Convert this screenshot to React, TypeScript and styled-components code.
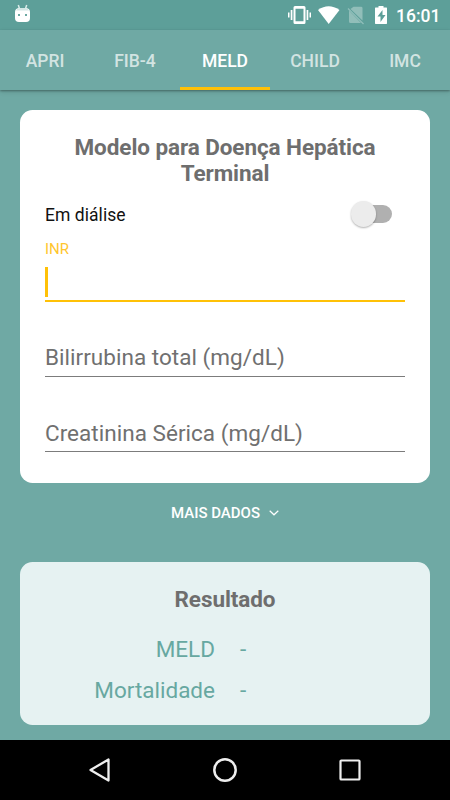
import React from "react";
import styled, { createGlobalStyle } from "styled-components";

const GlobalStyle = createGlobalStyle`
  * { box-sizing: border-box; }
  body { margin: 0; font-family: Roboto, "Liberation Sans", sans-serif; }
`;

const Screen = styled.div`
  width: 450px;
  height: 800px;
  display: flex;
  flex-direction: column;
  overflow: hidden;
  background: #6fa9a4;
`;

const StatusBar = styled.header`
  height: 30px;
  flex: none;
  display: flex;
  justify-content: space-between;
  background: #5d9f99;
`;

const StatusGroup = styled.div`
  display: flex;
  height: 30px;
`;

const Clock = styled.time`
  width: 54px;
  padding-right: 11px;
  margin-left: -1px;
  color: #fff;
  font-size: 17.5px;
  font-weight: 500;
  line-height: 32px;
  white-space: nowrap;
`;

const Tabs = styled.nav`
  height: 60px;
  flex: none;
  display: grid;
  grid-template-columns: repeat(5, 1fr);
  background: #6fa9a4;
  box-shadow: 0 1px 2px rgba(0, 0, 0, 0.32), 0 2px 5px rgba(0, 0, 0, 0.12);
  z-index: 1;
`;

const Tab = styled.button<{ $active?: boolean }>`
  padding: 5px 0 0;
  border: 0;
  border-bottom: 3px solid ${(p) => (p.$active ? "#ffc107" : "transparent")};
  background: none;
  color: ${(p) => (p.$active ? "#fff" : "rgba(255, 255, 255, 0.7)")};
  font: 500 17.5px Roboto, sans-serif;
`;

const Content = styled.main`
  flex: 1;
  padding: 20px 20px 0;
`;

const FormCard = styled.section`
  height: 372.5px;
  padding: 24px 25px 0;
  border-radius: 12.5px;
  background: #fff;
`;

const Title = styled.h1`
  margin: 0;
  color: #6e6e6e;
  font-size: 22.5px;
  font-weight: 700;
  letter-spacing: -0.08px;
  line-height: 26px;
  text-align: center;
`;

const SwitchRow = styled.div`
  height: 56px;
  display: flex;
  align-items: center;
  justify-content: space-between;
  padding-right: 13.5px;
  color: #111;
  font-size: 17.5px;
`;

const SwitchLabel = styled.span`
  padding-top: 1px;
  letter-spacing: 0.05px;
`;

const SwitchTrack = styled.span`
  width: 41px;
  height: 17.5px;
  display: flex;
  align-items: center;
  border-radius: 9px;
  background: linear-gradient(90deg, transparent 8px, #b0b0b0 8px);
`;

const SwitchThumb = styled.span`
  width: 25.5px;
  height: 25.5px;
  border-radius: 50%;
  background: #ececec;
  box-shadow: 0 1px 2px rgba(0, 0, 0, 0.3);
`;

const FocusedField = styled.label`
  height: 61px;
  margin-top: -1px;
  display: flex;
  flex-direction: column;
  border-bottom: 2px solid #ffc107;
`;

const FloatingLabel = styled.span`
  margin-top: -1px;
  color: #ffc62e;
  font-size: 15px;
  line-height: 18px;
`;

const Caret = styled.span`
  width: 2.5px;
  height: 30px;
  margin-top: auto;
  margin-bottom: 3px;
  background: #ffc107;
`;

const Field = styled.div<{ $gap: number }>`
  height: 75px;
  display: flex;
  align-items: flex-end;
  padding-bottom: ${(p) => p.$gap}px;
  border-bottom: 1px solid #7c7c7c;
  color: #707070;
  font-size: 22.5px;
  letter-spacing: 0.03px;
  line-height: 26px;
`;

const MoreButton = styled.button`
  width: 100%;
  height: 79.5px;
  padding: 0 0 18.5px;
  display: flex;
  align-items: center;
  justify-content: center;
  gap: 9px;
  border: 0;
  background: none;
  color: #fff;
  font: 500 15px Roboto, sans-serif;
`;

const ResultCard = styled.section`
  height: 162.5px;
  padding-top: 24px;
  border-radius: 12.5px;
  background: #e6f2f2;
`;

const Results = styled.dl`
  margin: 17px 0 0;
  display: grid;
  grid-template-columns: 195px 1fr;
  grid-auto-rows: 41px;
  column-gap: 25px;
  color: #67a8a1;
  font-size: 22.5px;
  line-height: 41px;
`;

const ResultName = styled.dt`
  text-align: right;
`;

const ResultValue = styled.dd`
  margin: 0;
`;

const NavigationBar = styled.footer`
  height: 60px;
  flex: none;
  display: grid;
  grid-template-columns: repeat(3, 125px);
  justify-content: center;
  justify-items: center;
  align-items: center;
  background: #000;
`;

const tabs = ["APRI", "FIB-4", "MELD", "CHILD", "IMC"];

const results = [
  { name: "MELD", value: "-" },
  { name: "Mortalidade", value: "-" },
];

const RobotIcon = () => (
  <svg width="45" height="30">
    <path d="M18.300 5l1.300 4M26.700 5l-1.300 4" stroke="#d9ebe9" strokeWidth="1.500" />
    <path d="M15 12q0-4 5-4h5q5 0 5 4v6q0 4-4 4h-7q-4 0-4-4z" fill="#fff" />
    <path d="M16 10.500q1-2.500 4-2.500h5q3 0 4 2.500z" fill="#d3e7e5" />
    <path d="M18 14h2v2h-2zM25 14h2v2h-2z" fill="#6ba8a2" />
  </svg>
);

const SystemIcons = () => (
  <svg width="127" height="30" viewBox="-7 0 127 30" fill="#fff">
    <path d="M18 6h9q1.500 0 1.500 1.500v15q0 1.500-1.500 1.500h-9q-1.500 0-1.500-1.500v-15q0-1.500 1.500-1.500zM18.500 8.700v12.600h8V8.700z" fillRule="evenodd" />
    <path d="M13.700 10h1.700v10h-1.700zM11 12.500h1.500v5H11zM29.600 10h1.700v10h-1.700zM32.500 12.500H34v5h-1.500z" />
    <path d="M41 10Q51.500 2.500 62.500 10L51.700 24z" />
    <path d="M73.500 9l3-2.300H84q1.500 0 1.500 1.300v12.500zM72 10.500v11q0 1.500 1.500 1.500H84z" opacity=".32" />
    <path d="M71 8.500l15.500 15.500" stroke="#8fbfba" strokeWidth="1.300" />
    <path d="M98.500 7.500h3V6h5v1.500h3q.5 0 .5 1V23q0 1-.5 1h-11q-.5 0-.5-1V8.500q0-1 .5-1zM105.500 10l-5 6.500h3V22l5-7h-3z" fillRule="evenodd" />
  </svg>
);

const ChevronIcon = () => (
  <svg width="10" height="8" fill="none" stroke="#fff" strokeWidth="1.200">
    <path d="M.7 1.700L5 5.800l4.300-4.100" />
  </svg>
);

export default function App() {
  return (
    <>
      <GlobalStyle />
      <Screen>
        <StatusBar>
          <StatusGroup>
            <RobotIcon />
          </StatusGroup>
          <StatusGroup>
            <SystemIcons />
            <Clock>16:01</Clock>
          </StatusGroup>
        </StatusBar>
        <Tabs>
          {tabs.map((tab) => (
            <Tab key={tab} $active={tab === "MELD"}>
              {tab}
            </Tab>
          ))}
        </Tabs>
        <Content>
          <FormCard>
            <Title>Modelo para Doença Hepática Terminal</Title>
            <SwitchRow>
              <SwitchLabel>Em diálise</SwitchLabel>
              <SwitchTrack>
                <SwitchThumb />
              </SwitchTrack>
            </SwitchRow>
            <FocusedField>
              <FloatingLabel>INR</FloatingLabel>
              <Caret />
            </FocusedField>
            <Field $gap={6}>Bilirrubina total (mg/dL)</Field>
            <Field $gap={5}>Creatinina Sérica (mg/dL)</Field>
          </FormCard>
          <MoreButton>
            MAIS DADOS
            <ChevronIcon />
          </MoreButton>
          <ResultCard>
            <Title as="h2">Resultado</Title>
            <Results>
              {results.map(({ name, value }) => (
                <React.Fragment key={name}>
                  <ResultName>{name}</ResultName>
                  <ResultValue>{value}</ResultValue>
                </React.Fragment>
              ))}
            </Results>
          </ResultCard>
        </Content>
        <NavigationBar>
          <svg width="24" height="28" fill="none" stroke="#eee" strokeWidth="2.300" strokeLinejoin="round">
            <path d="M20.500 3.500v21L2.500 14z" />
          </svg>
          <svg width="28" height="28" fill="none" stroke="#eee" strokeWidth="2.500">
            <circle cx="14" cy="14" r="10.700" />
          </svg>
          <svg width="24" height="24" fill="none" stroke="#eee" strokeWidth="2.200">
            <rect x="2.500" y="2.500" width="19" height="19" rx=".8" />
          </svg>
        </NavigationBar>
      </Screen>
    </>
  );
}
